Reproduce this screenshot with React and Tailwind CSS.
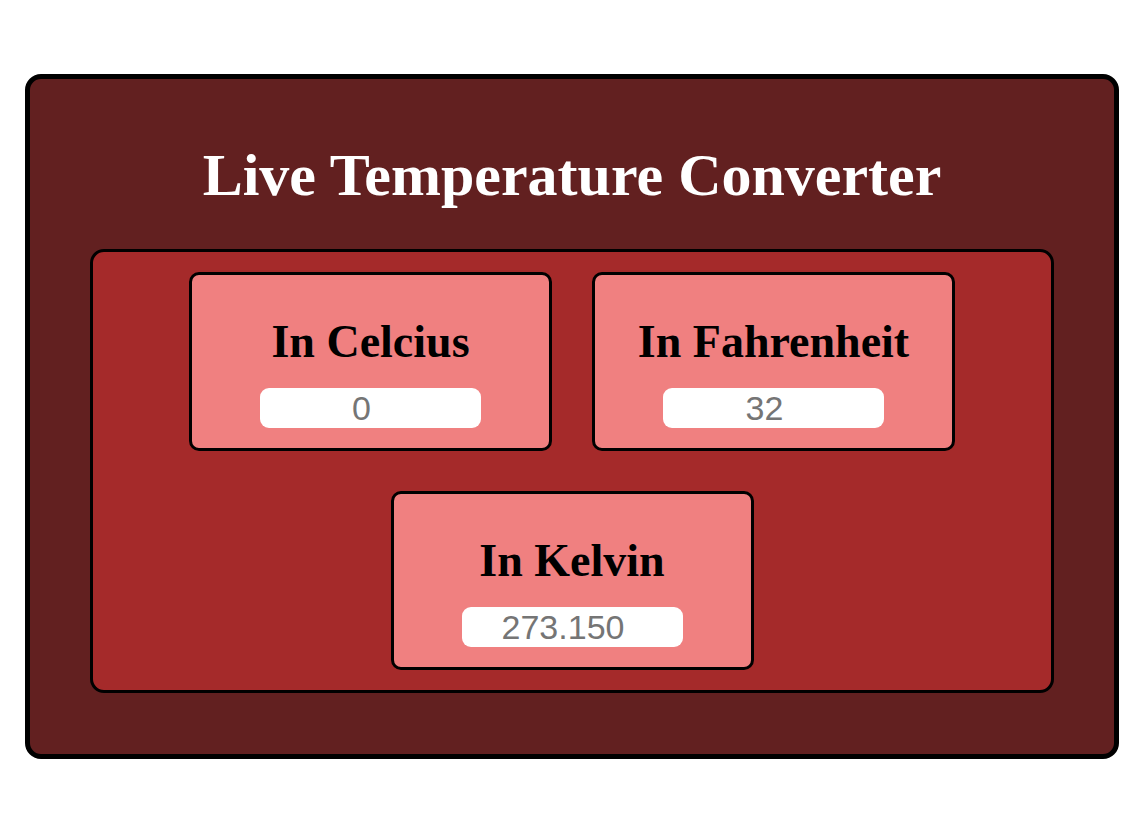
import React from "react";

function Card({ title, value }) {
  return (
    <div className="w-[363px] rounded-[10px] border-[3px] border-black bg-[#f08080] px-5 pt-5 pb-5 flex flex-col items-center">
      <h2 className="my-5 text-[46px] leading-[53px] font-bold text-black" style={{ fontFamily: '"Liberation Serif", serif' }}>
        {title}
      </h2>
      <input
        type="text"
        readOnly
        value={value}
        className="h-[40px] w-[221px] rounded-[9px] bg-white text-center pr-[18px] text-[34px] text-[#757575] outline-none border-0"
        style={{ fontFamily: '"Liberation Sans", Arial, sans-serif' }}
      />
    </div>
  );
}

export default function App() {
  return (
    <div className="min-h-[832px] bg-white pt-[74px] pl-[25px]">
      <div className="w-[1094px] rounded-[16px] border-[5px] border-black bg-[#622020] px-[60px] pt-[63px] pb-[61px]">
        <h1
          className="text-center text-[60px] leading-[66px] font-bold text-white mb-[41px]"
          style={{ fontFamily: '"Liberation Serif", serif' }}
        >
          Live Temperature Converter
        </h1>
        <div className="rounded-[14px] border-[3px] border-black bg-[#a52a2a] p-5 flex flex-wrap justify-center gap-[40px]">
          <Card title="In Celcius" value="0" />
          <Card title="In Fahrenheit" value="32" />
          <Card title="In Kelvin" value="273.150" />
        </div>
      </div>
    </div>
  );
}
